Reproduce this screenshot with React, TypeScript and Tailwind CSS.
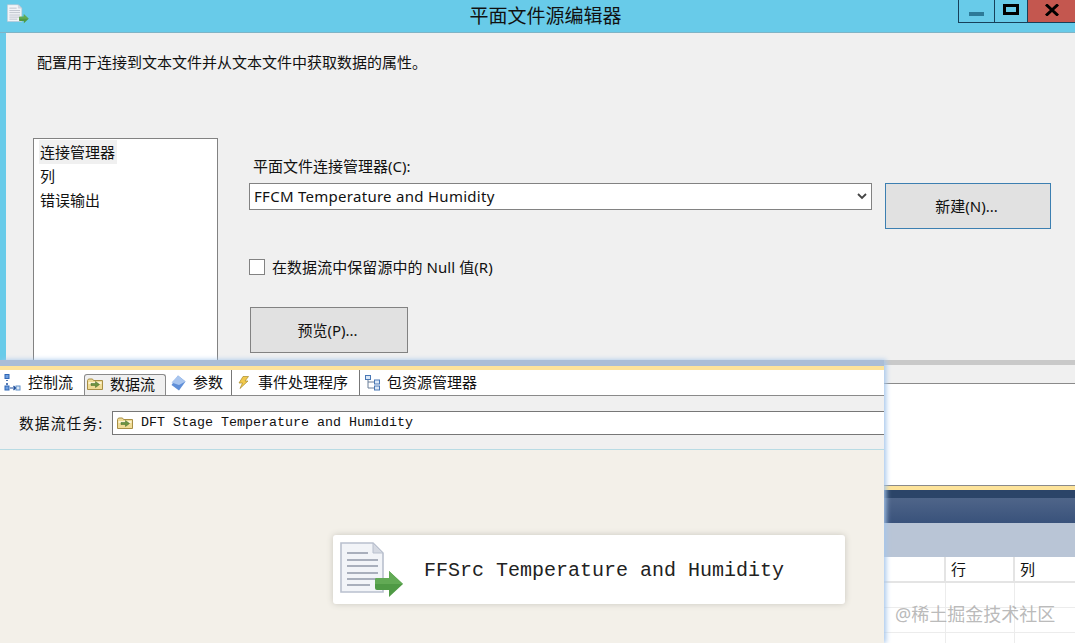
import React from "react";

const cjk = "font-['Noto_Sans','Noto_Sans_CJK_SC',sans-serif]";
const mono = "font-['Liberation_Mono','Noto_Sans_CJK_SC',monospace]";

const DocIcon = ({ className }: { className: string }) => (
  <svg viewBox="0 0 64 56" className={className}>
    <path d="M1 1H33L43 11V50H1Z" fill="#f2f4f8" stroke="#b9c0ce" strokeWidth="1.6" />
    <path d="M33 1V11H43Z" fill="#d5d9e2" stroke="#b9c0ce" strokeWidth="1" />
    <path d="M7 11H28M7 18H38M7 24H38M7 31H38M7 37H38M7 43H30" stroke="#a9afbc" strokeWidth="2" />
    <path d="M35 38Q35 36 37 36H49V29L63 42L49 55V48H37Q35 48 35 46Z" fill="#4f9a45" />
    <path d="M35 38Q35 36 37 36H49V29L63 42H35Z" fill="#62aa55" />
  </svg>
);

const FolderIcon = () => (
  <svg viewBox="0 0 16 12" className="h-[12px] w-[16px] shrink-0">
    <path d="M0.5 2.5L1.5 1H5.5L6.5 2.5H15.5V11.5H0.5Z" fill="#f0dc96" stroke="#a88f45" strokeWidth="1" />
    <path d="M1.5 4H14.5V6H1.5Z" fill="#fbf3d2" />
    <path d="M4 5.5H8.5V3.5L12.5 6.5L8.5 9.5V7.5H4Z" fill="#6d9440" stroke="#3f6a2a" strokeWidth="0.5" />
  </svg>
);

const ControlFlowIcon = () => (
  <svg viewBox="0 0 17 17" className="h-[17px] w-[17px] shrink-0">
    <rect x="1" y="0.5" width="4" height="4" fill="#6f9fe0" stroke="#2f66b5" />
    <rect x="1" y="12" width="4" height="4" fill="#6f9fe0" stroke="#2f66b5" />
    <rect x="12" y="12" width="4" height="4" fill="#dbe8f7" stroke="#5f8fc8" />
    <path d="M3 6V7M3 9V11" stroke="#1f4f9c" strokeWidth="1.5" />
    <path d="M6 14H11M9.5 12L11.5 14L9.5 16" fill="none" stroke="#1f4f9c" strokeWidth="1.2" />
  </svg>
);

const ParamIcon = () => (
  <svg viewBox="0 0 15 16" className="h-[16px] w-[15px] shrink-0">
    <path d="M7 0.5L14.5 6.5L8 15.5L0.5 10Z" fill="#5f8fd8" />
    <path d="M7 0.5L14.5 6.5L8 10L0.5 7.5Z" fill="#a9c5ee" />
  </svg>
);

const BoltIcon = () => (
  <svg viewBox="0 0 11 13" className="h-[13px] w-[11px] shrink-0">
    <path d="M5 0.5H10.5L7 5H10L2 12.5L4.5 7H1Z" fill="#f2c94c" stroke="#a88b2d" strokeWidth="0.7" />
  </svg>
);

const TreeIcon = () => (
  <svg viewBox="0 0 15 16" className="h-[16px] w-[15px] shrink-0">
    <path d="M3 4V13H9M3 7H9" fill="none" stroke="#6b7f99" />
    <rect x="0.5" y="0.5" width="5" height="4" fill="#dbe8f7" stroke="#4a78b5" />
    <rect x="9.5" y="5" width="5" height="4" fill="#dbe8f7" stroke="#4a78b5" />
    <rect x="9.5" y="11" width="5" height="4" fill="#dbe8f7" stroke="#4a78b5" />
  </svg>
);

const Tabs = () => (
  <div className={`flex h-[26px] items-end border-b border-[#8a8a8a] bg-white text-[15px] text-[#111] ${cjk}`}>
    <div className="flex h-[25px] w-[84px] items-center gap-[7px] pl-[4px]">
      <ControlFlowIcon />
      <span>控制流</span>
    </div>
    <div className="flex h-[21px] w-[82px] items-center gap-[7px] rounded-t-[3px] border border-b-0 border-[#8a8a8a] bg-[#f0f0f0] pb-[2px] pl-[2px]">
      <FolderIcon />
      <span className="leading-[18px]">数据流</span>
    </div>
    <div className="flex h-[25px] w-[66px] items-center gap-[7px] border-r border-[#777] pl-[5px]">
      <ParamIcon />
      <span>参数</span>
    </div>
    <div className="flex h-[25px] w-[128px] items-center gap-[9px] border-r border-[#777] pl-[6px]">
      <BoltIcon />
      <span>事件处理程序</span>
    </div>
    <div className="flex h-[25px] items-center gap-[7px] pl-[5px]">
      <TreeIcon />
      <span>包资源管理器</span>
    </div>
  </div>
);

const Dialog = () => (
  <div className={`flex h-[360px] shrink-0 flex-col bg-[#68cbe9] text-[15px] text-[#111] ${cjk}`}>
    <div className="relative flex h-[33px] shrink-0 items-center justify-center border-b border-[#7fb4c6]">
      <DocIcon className="absolute left-[7px] top-[4px] h-[20px] w-[22px]" />
      <span className="ml-[16px] text-[19px] leading-none">平面文件源编辑器</span>
      <div className="absolute right-0 top-0 flex h-[23px] border-b border-l border-[#17405a]">
        <div className="flex w-[36px] items-center justify-center border-r border-[#17405a]">
          <div className="mt-[5px] h-[4px] w-[15px] bg-[#2d7a98]" />
        </div>
        <div className="flex w-[33px] items-center justify-center border-r border-[#17405a]">
          <div className="mb-[3px] h-[11px] w-[16px] border-[3px] border-black" />
        </div>
        <div className="flex w-[47px] items-center justify-center bg-[#c4574f] text-[17px] font-bold leading-none text-black">
          <svg viewBox="0 0 14 12" className="mb-[3px] h-[12px] w-[14px]">
            <path d="M1 0.5L13 11.5M13 0.5L1 11.5" stroke="#000" strokeWidth="3" />
          </svg>
        </div>
      </div>
    </div>
    <div className="ml-[6px] flex min-h-0 flex-1 flex-col bg-[#f0f0f0]">
      <p className="ml-[31px] mt-[17px] h-[88px] leading-[24px]">配置用于连接到文本文件并从文本文件中获取数据的属性。</p>
      <div className="flex min-h-0 flex-1">
        <div className="ml-[27px] h-full w-[185px] border border-b-0 border-[#828282] bg-white pl-[5px] pt-[1px] leading-[24px]">
          <div className="w-[78px] bg-[#f0f0f0] pl-[1px]">连接管理器</div>
          <div className="pl-[1px]">列</div>
          <div className="pl-[1px]">错误输出</div>
        </div>
        <div className="ml-[31px] flex flex-col">
          <div className="ml-[4px] mt-[16px] h-[29px] leading-[24px]">平面文件连接管理器(C):</div>
          <div className="flex items-start">
            <div className="flex h-[27px] w-[623px] items-center justify-between border border-[#828282] bg-white pb-[1px] pl-[4px] pr-[4px]">
              <span className="tracking-[0.28px]">FFCM Temperature and Humidity</span>
              <svg viewBox="0 0 10 7" className="h-[7px] w-[10px]">
                <path d="M1 1L5 5L9 1" fill="none" stroke="#444" strokeWidth="1.8" />
              </svg>
            </div>
            <div className="ml-[13px] flex h-[46px] w-[166px] items-center justify-center border border-[#3c7fb1] bg-[#e1e1e1] pr-[3px]">新建(N)...</div>
          </div>
          <label className="mt-[30px] flex h-[16px] items-center gap-[7px]">
            <span className="h-[16px] w-[16px] border border-[#828282] bg-white" />
            <span className="tracking-[0.06px]">在数据流中保留源中的 Null 值(R)</span>
          </label>
          <div className="ml-[1px] mt-[32px] flex h-[46px] w-[158px] items-center justify-center border border-[#828282] bg-[#e1e1e1] pr-[3px]">预览(P)...</div>
        </div>
      </div>
    </div>
  </div>
);

const DesignerPanel = () => (
  <div className="z-10 flex w-[884px] shrink-0 flex-col border-t-[6px] border-[#aabdd6] shadow-[2px_0_5px_#a5c6ec]">
    <div className="h-[4px] shrink-0 bg-[#fde39a]" />
    <Tabs />
    <div className={`flex h-[54px] shrink-0 items-center border-b border-[#b8dbe4] bg-[#f0f0f0] pl-[19px] text-[14.67px] text-[#111] ${cjk}`}>
      <span className="w-[93px] tracking-[1.2px]">数据流任务:</span>
      <div className="flex h-[24px] flex-1 items-center gap-[8px] border border-r-0 border-[#777] bg-white pl-[4px]">
        <FolderIcon />
        <span className={`${mono} pt-[1px] text-[13.33px]`}>DFT Stage Temperature and Humidity</span>
      </div>
    </div>
    <div className="flex min-h-0 flex-1 items-start bg-[#f3f0e9] pl-[333px] pt-[85px]">
      <div className="flex h-[69px] w-[512px] items-center rounded-[3px] bg-white pl-[7px] shadow-[0_0_6px_#c9c6bd]">
        <DocIcon className="h-[56px] w-[64px]" />
        <span className={`ml-[20px] pt-[2px] text-[20px] text-[#222] ${mono}`}>FFSrc Temperature and Humidity</span>
      </div>
    </div>
  </div>
);

const ResultsPanel = () => (
  <div className="flex min-w-0 flex-1 flex-col border-t-[5px] border-[#c9c9c9]">
    <div className="h-[19px] shrink-0 border-b border-[#8a8a8a] bg-[#f0f0f0]" />
    <div className="h-[101px] shrink-0 bg-white" />
    <div className="h-[5px] shrink-0 border-t border-[#8a8a8a] bg-[#fde39a]" />
    <div className="h-[8px] shrink-0 bg-[#2b4468]" />
    <div className="h-[25px] shrink-0 bg-gradient-to-b from-[#4f6589] to-[#39527b]" />
    <div className="h-[34px] shrink-0 bg-[#b9c5d6]" />
    <div className={`flex h-[26px] shrink-0 border-b-2 border-[#e4e4e4] bg-white text-[15px] text-[#111] ${cjk}`}>
      <div className="w-[62px] border-r-2 border-[#e4e4e4]" />
      <div className="w-[69px] border-r-2 border-[#e4e4e4] pl-[5px] leading-[24px]">行</div>
      <div className="flex-1 pl-[5px] leading-[24px]">列</div>
    </div>
    {[0, 1, 2].map((row) => (
      <div key={row} className="flex h-[25px] shrink-0 border-b border-[#ececec] bg-white">
        <div className="w-[62px] border-r border-[#ececec]" />
        <div className="w-[69px] border-r border-[#ececec]" />
      </div>
    ))}
  </div>
);

export default function App() {
  return (
    <div className="relative flex h-[643px] w-[1075px] flex-col overflow-hidden bg-white">
      <Dialog />
      <div className="flex min-h-0 flex-1">
        <DesignerPanel />
        <ResultsPanel />
      </div>
      <span className={`absolute left-[895px] top-[602px] z-20 text-[18px] leading-[24px] text-[#a8a8a8]/80 ${cjk}`}>@稀土掘金技术社区</span>
    </div>
  );
}
